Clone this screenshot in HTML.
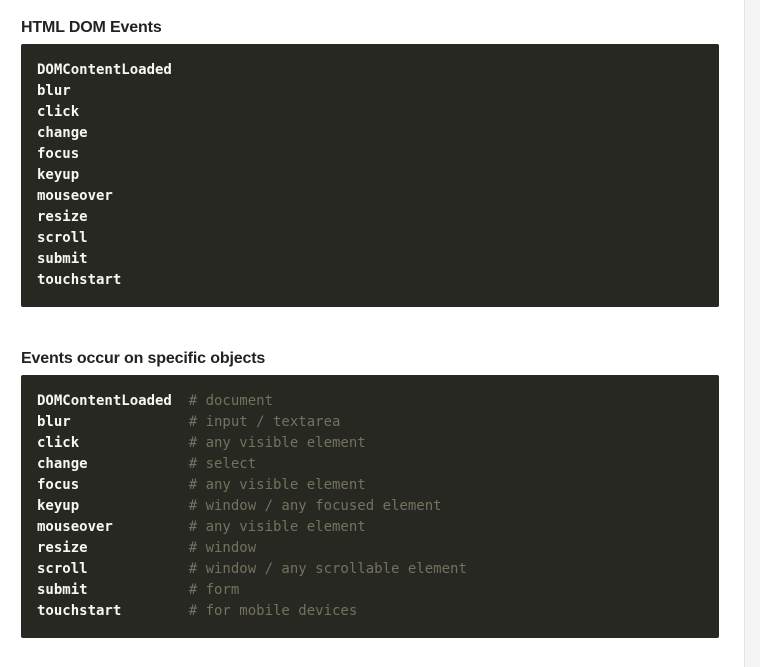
<!DOCTYPE html>
<html><head><meta charset="utf-8"><style>
html,body{margin:0;padding:0;background:#fff;width:760px;height:667px;overflow:hidden;position:relative}
.side{position:absolute;left:744px;top:0;width:16px;height:667px;background:#f5f5f5;border-left:1px solid #e4e4e4}
h3{position:absolute;left:21px;margin:0;font:bold 16px/20px "Liberation Sans",sans-serif;color:#222;letter-spacing:-0.15px}
pre{position:absolute;left:21px;width:666px;margin:0;padding:16px;background:#272822;color:#f8f8f2;font:bold 14px/21px "DejaVu Sans Mono","Liberation Mono",monospace;border-radius:2px;height:231px}
.c{color:#75715e;font-weight:normal}
</style></head><body>
<div class="side"></div>
<h3 style="top:18px">HTML DOM Events</h3>
<pre style="top:44px">DOMContentLoaded
blur
click
change
focus
keyup
mouseover
resize
scroll
submit
touchstart</pre>
<h3 style="top:349px">Events occur on specific objects</h3>
<pre style="top:375px">DOMContentLoaded  <span class="c"># document</span>
blur              <span class="c"># input / textarea</span>
click             <span class="c"># any visible element</span>
change            <span class="c"># select</span>
focus             <span class="c"># any visible element</span>
keyup             <span class="c"># window / any focused element</span>
mouseover         <span class="c"># any visible element</span>
resize            <span class="c"># window</span>
scroll            <span class="c"># window / any scrollable element</span>
submit            <span class="c"># form</span>
touchstart        <span class="c"># for mobile devices</span></pre>
</body></html>
